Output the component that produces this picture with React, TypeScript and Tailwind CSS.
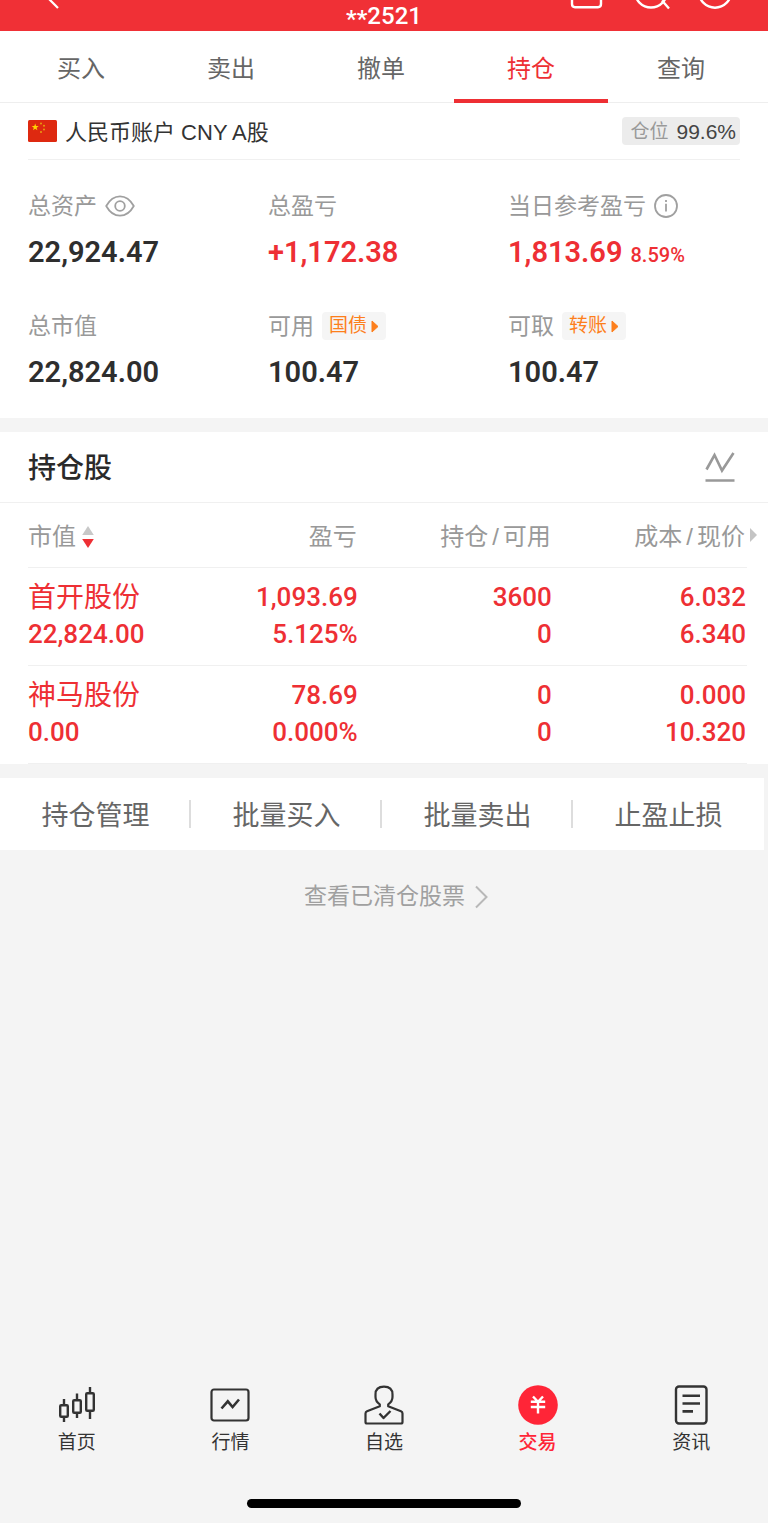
import React from "react";

const tabs = ["买入", "卖出", "撤单", "持仓", "查询"];

const holdings = [
  { name: "首开股份", value: "22,824.00", profit: "1,093.69", rate: "5.125%", amount: "3600", usable: "0", cost: "6.032", price: "6.340" },
  { name: "神马股份", value: "0.00", profit: "78.69", rate: "0.000%", amount: "0", usable: "0", cost: "0.000", price: "10.320" },
];

const actions = ["持仓管理", "批量买入", "批量卖出", "止盈止损"];

function Flag() {
  return (
    <svg width="29" height="22" viewBox="0 0 29 22" aria-hidden="true">
      <rect width="29" height="22" rx="1.5" fill="#de2910" />
      <path d="M7.2 3.6l.9 2.500h2.600l-2.100 1.600.8 2.600-2.200-1.600-2.200 1.600.8-2.600-2.100-1.600h2.600z" fill="#ffd500" />
      <g fill="#e8a010">
        <circle cx="13" cy="3.4" r="1" />
        <circle cx="16" cy="5.8" r="1" />
        <circle cx="16" cy="9.4" r="1" />
        <circle cx="13" cy="12" r="1" />
      </g>
    </svg>
  );
}

function EyeIcon() {
  return (
    <svg width="30" height="22" viewBox="0 0 30 22" fill="none" stroke="#a0a0a0" strokeWidth="1.8" aria-hidden="true">
      <path d="M1.2 11C4.8 4.5 9.500 1.300 15 1.300S25.200 4.500 28.800 11C25.200 17.500 20.500 20.700 15 20.700S4.800 17.500 1.200 11Z" strokeLinejoin="round" />
      <circle cx="15" cy="11" r="4.800" />
    </svg>
  );
}

function InfoIcon() {
  return (
    <svg width="24" height="24" viewBox="0 0 24 24" fill="none" stroke="#a0a0a0" strokeWidth="1.8" aria-hidden="true">
      <circle cx="12" cy="12" r="11" />
      <path d="M12 9.800V17.500M12 6V8" strokeWidth="1.800" />
    </svg>
  );
}

function TagButton({ children }: { children: React.ReactNode }) {
  return (
    <button type="button" className="flex h-7 items-center gap-1 rounded-sm bg-[#f5f5f5] px-[7px] text-[19px] text-[#fd7f1c]">
      {children}
      <svg width="8" height="13" viewBox="0 0 8 13" aria-hidden="true">
        <path d="M1 1L7 6.500L1 12Z" fill="#fd7f1c" stroke="#fd7f1c" strokeLinejoin="round" />
      </svg>
    </button>
  );
}

function Stat({ label, extra, value, note, red }: { label: string; extra?: React.ReactNode; value: string; note?: string; red?: boolean }) {
  return (
    <div className="flex flex-col gap-3">
      <dt className="flex h-8 items-center gap-2 text-[23px] whitespace-nowrap text-[#999]">
        {label}
        {extra}
      </dt>
      <dd className={`flex items-baseline gap-2 font-[Roboto] text-[29px] leading-9 font-semibold ${red ? "text-[#ee2f34]" : "text-[#2e2e2e]"}`}>
        {value}
        {note && <span className="text-[20px] font-medium">{note}</span>}
      </dd>
    </div>
  );
}

function Pair({ left, right }: { left: string; right: string }) {
  return (
    <>
      {left}
      <span className="mx-1">/</span>
      {right}
    </>
  );
}

const navItems = [
  {
    label: "首页",
    icon: (
      <g fill="none" stroke="#333" strokeWidth="2.400">
        <rect x="3.200" y="20.200" width="7.600" height="11.600" rx="1" />
        <path d="M7 14V20M7 32V37" />
        <rect x="16.200" y="15.200" width="7.600" height="12.600" rx="1" />
        <path d="M20 8.500V15M20 28V33" />
        <rect x="29.200" y="8.200" width="7.600" height="17.600" rx="1" />
        <path d="M33 2V8M33 26V34" />
      </g>
    ),
  },
  {
    label: "行情",
    icon: (
      <g fill="none" stroke="#333" strokeWidth="2.200">
        <rect x="1.500" y="4.500" width="37" height="31" rx="2.500" />
        <path d="M11.500 23.500L17.800 16.300L22.600 22L29 14.500" strokeWidth="2.600" />
      </g>
    ),
  },
  {
    label: "自选",
    icon: (
      <g fill="none" stroke="#333" strokeWidth="2.200" strokeLinejoin="round">
        <path d="M15.800 21.200L3 26.200Q1.500 26.800 1.500 28.500V37Q1.500 38.500 3 38.500H37Q38.500 38.500 38.500 37V28.500Q38.500 26.800 37 26.200L24.200 21.200V19.300Q28.500 16.500 28.500 12V9.500Q28.500 1.700 20 1.700T11.500 9.500V12Q11.500 16.500 15.800 19.300Z" stroke="none" />
        <path d="M15.800 21.200L3 26.200Q1.500 26.800 1.500 28.500V37Q1.500 38.500 3 38.500H37Q38.500 38.500 38.500 37V28.500Q38.500 26.800 37 26.200L24.200 21.200V19.300Q28.500 16.500 28.500 12V9.500Q28.500 1.700 20 1.700T11.500 9.500V12Q11.500 16.500 15.800 19.300Z" />
        <path d="M15.500 28.500L19.500 33L26.500 26" strokeWidth="2.400" />
      </g>
    ),
  },
  {
    label: "交易",
    active: true,
    icon: (
      <g>
        <circle cx="20" cy="20" r="19.800" fill="#ff2537" />
        <path d="M15 11.500L20 16.800L25 11.500M20 16.800V28.500M12.800 16.800H27.200M12.800 22H27.200" fill="none" stroke="#fff" strokeWidth="2.400" />
      </g>
    ),
  },
  {
    label: "资讯",
    icon: (
      <g fill="none" stroke="#333" strokeWidth="2.400">
        <rect x="5" y="1.500" width="30.500" height="37" rx="3" />
        <path d="M11.500 10.700H29M11.500 18.500H29M11.500 26.400H22" strokeWidth="2.600" />
      </g>
    ),
  },
];

export default function App() {
  return (
    <div className="flex min-h-screen flex-col bg-[#f4f4f4] font-['Liberation_Sans','Noto_Sans_CJK_SC',sans-serif]">
      <header className="grid h-[31px] grid-cols-3 bg-[#f03036] text-white">
        <button type="button" aria-label="返回" className="flex items-start pl-12">
          <svg width="12" height="10" viewBox="0 0 12 10" fill="none" stroke="#fff" strokeWidth="2.200">
            <path d="M0 -2L10 8" />
          </svg>
        </button>
        <h1 className="flex items-center justify-center font-[Roboto] text-2xl leading-6 font-medium">
          <span className="pt-1.5">**</span>2521
        </h1>
        <div className="flex items-start justify-end gap-8 pr-9">
          <button type="button" aria-label="消息">
            <svg width="34" height="11" viewBox="0 0 34 11" fill="none" stroke="#fff" strokeWidth="2.400">
              <path d="M3 -4V4Q3 7.200 6 7.200H29Q32 7.200 32 4V-4" />
            </svg>
          </button>
          <button type="button" aria-label="搜索">
            <svg width="36" height="11" viewBox="0 0 36 11" fill="none" stroke="#fff" strokeWidth="2.400">
              <circle cx="16" cy="-8.500" r="16" />
              <path d="M27 0.500L34 8.500" />
            </svg>
          </button>
          <button type="button" aria-label="更多" className="-ml-[5px]">
            <svg width="34" height="11" viewBox="0 0 34 11" fill="none" stroke="#fff" strokeWidth="2.400">
              <circle cx="17" cy="-8.500" r="16.200" />
            </svg>
          </button>
        </div>
      </header>

      <nav className="grid h-[72px] grid-cols-5 border-b border-[#eee] bg-white pr-3 pl-1.5">
        {tabs.map((tab) => (
          <button key={tab} type="button" className={`relative pt-1 text-2xl ${tab === "持仓" ? "text-[#ee2f34]" : "text-[#666]"}`}>
            {tab}
            {tab === "持仓" && <span className="absolute -inset-x-0.5 -bottom-px h-1 bg-[#ee2f34]" />}
          </button>
        ))}
      </nav>

      <section className="bg-white px-7 pb-7">
        <div className="flex h-[57px] items-center gap-2 border-b border-[#f0f0f0] text-[#333]">
          <Flag />
          <h2 className="pt-0.5 text-[22px]">人民币账户 CNY A股</h2>
          <p className="ml-auto flex h-7 items-center gap-2 rounded-sm bg-[#ececec] pr-1 pl-2 text-[21px] text-[#444]">
            <span className="pt-0.5 text-[19px] text-[#999]">仓位</span>
            <span className="pt-0.5">99.6%</span>
          </p>
        </div>
        <dl className="-mr-2 grid grid-cols-3 gap-y-[37px] pt-[30px]">
          <Stat label="总资产" value="22,924.47" extra={<button type="button" aria-label="隐藏资产"><EyeIcon /></button>} />
          <Stat label="总盈亏" value="+1,172.38" red />
          <Stat label="当日参考盈亏" value="1,813.69" note="8.59%" red extra={<button type="button" aria-label="说明"><InfoIcon /></button>} />
          <Stat label="总市值" value="22,824.00" />
          <Stat label="可用" value="100.47" extra={<TagButton>国债</TagButton>} />
          <Stat label="可取" value="100.47" extra={<TagButton>转账</TagButton>} />
        </dl>
      </section>

      <section className="mt-[14px] bg-white">
        <div className="flex h-[71px] items-center justify-between border-b border-[#f0f0f0] pr-8 pl-7">
          <h2 className="pt-1 text-[28px] font-medium text-[#2a2a2a]">持仓股</h2>
          <button type="button" aria-label="走势">
            <svg width="32" height="32" viewBox="0 0 32 32" fill="none" stroke="#999" strokeWidth="2.600">
              <path d="M2.500 18.500L10.500 4L18 19.500L29.500 2M1.500 29.500H30.500" />
            </svg>
          </button>
        </div>
        <div className="pr-[21px] pl-7">
          <table className="w-full table-fixed border-collapse text-right">
            <thead>
              <tr className="h-16 border-b border-[#f0f0f0] text-2xl text-[#999]">
                <th scope="col" className="w-[19%] p-0 pt-1 text-left font-normal">
                  <button type="button" className="flex items-center gap-1.5">
                    市值
                    <svg width="12" height="24" viewBox="0 0 12 24" aria-hidden="true">
                      <path d="M6 1L11.800 10H.2Z" fill="#c8c8c8" />
                      <path d="M6 23L11.800 14H.2Z" fill="#ee2f34" />
                    </svg>
                  </button>
                </th>
                <th scope="col" className="w-[27%] p-0 pt-1 pr-0.5 font-normal">盈亏</th>
                <th scope="col" className="w-[27%] p-0 pt-1 pr-0.5 font-normal whitespace-nowrap"><Pair left="持仓" right="可用" /></th>
                <th scope="col" className="relative w-[27%] p-0 pt-1 pr-0.5 font-normal whitespace-nowrap">
                  <Pair left="成本" right="现价" />
                  <svg width="7" height="14" viewBox="0 0 7 14" className="absolute top-1/2 -right-2.5 -translate-y-1/2" aria-hidden="true">
                    <path d="M0 0L7 7L0 14Z" fill="#c4c4c4" />
                  </svg>
                </th>
              </tr>
            </thead>
            <tbody className="font-[Roboto,'Noto_Sans_CJK_SC',sans-serif] text-[26px] leading-[37px] font-medium text-[#ee2f34]">
              {holdings.map((h) => (
                <tr key={h.name} className="border-b border-[#f0f0f0]">
                  <td className="p-0 pt-[11px] pb-3 text-left whitespace-nowrap">
                    <div className="h-[37px] text-[28px] font-normal">{h.name}</div>
                    <div>{h.value}</div>
                  </td>
                  <td className="p-0 pt-[11px] pr-px pb-3"><div>{h.profit}</div><div>{h.rate}</div></td>
                  <td className="p-0 pt-[11px] pr-px pb-3"><div>{h.amount}</div><div>{h.usable}</div></td>
                  <td className="p-0 pt-[11px] pr-px pb-3"><div>{h.cost}</div><div>{h.price}</div></td>
                </tr>
              ))}
            </tbody>
          </table>
        </div>
      </section>

      <div className="mt-[14px] mr-1 grid h-[72px] grid-cols-4 items-center bg-white">
        {actions.map((action) => (
          <button key={action} type="button" className="h-7 border-r-2 border-[#ddd] pt-1 pl-0.5 text-[27px] leading-6 text-[#666] last:border-transparent">
            {action}
          </button>
        ))}
      </div>

      <a href="#cleared" className="mt-[31px] ml-6 flex h-8 items-center justify-center gap-2.5 self-center text-[23px] text-[#a0a0a0]">
        查看已清仓股票
        <svg width="13" height="24" viewBox="0 0 13 24" fill="none" stroke="#b8b8b8" strokeWidth="2" aria-hidden="true">
          <path d="M1 1.500L11.500 12L1 22.500" />
        </svg>
      </a>

      <footer className="mt-auto flex flex-col items-center pb-[15px]">
        <nav className="grid w-full grid-cols-5">
          {navItems.map((item) => (
            <a key={item.label} href="#nav" className={`flex flex-col items-center gap-1 text-[19px] leading-7 ${item.active ? "font-medium text-[#ff2537]" : "text-[#333]"}`}>
              <svg width="40" height="40" viewBox="0 0 40 40" aria-hidden="true">{item.icon}</svg>
              {item.label}
            </a>
          ))}
        </nav>
        <div className="mt-[42px] h-[9px] w-[274px] rounded-full bg-black" />
      </footer>
    </div>
  );
}
